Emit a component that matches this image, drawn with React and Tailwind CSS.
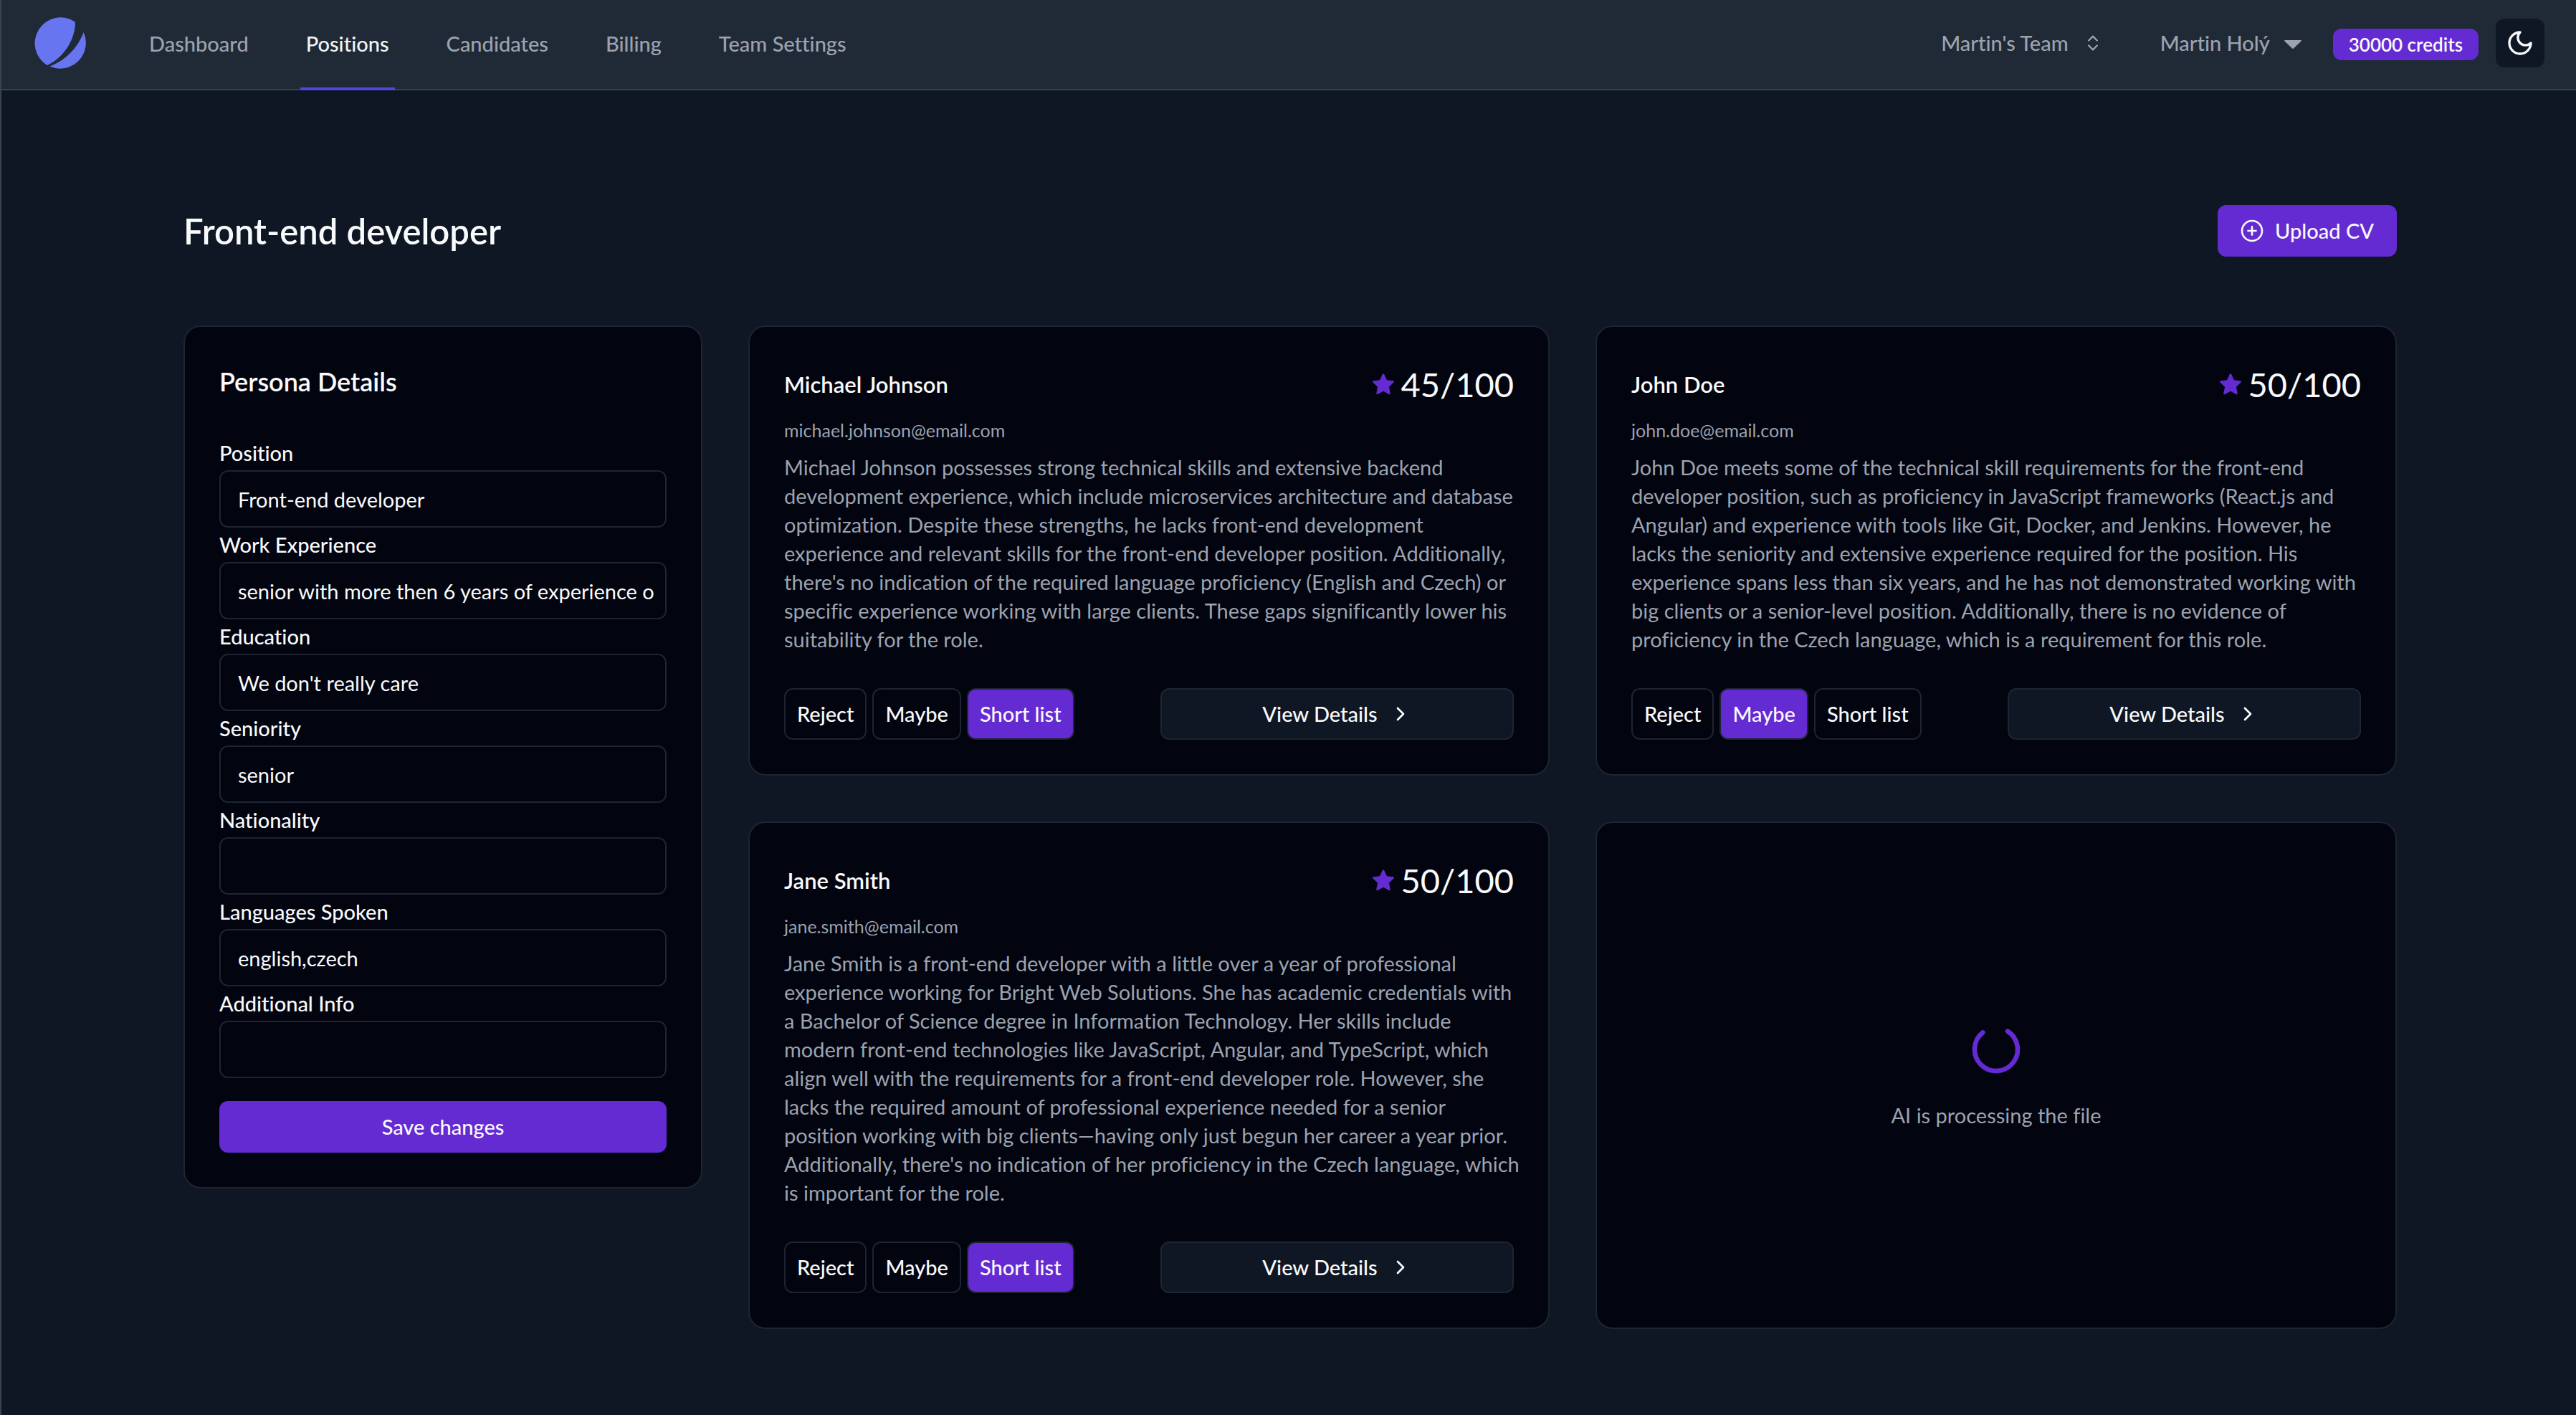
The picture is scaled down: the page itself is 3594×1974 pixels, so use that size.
import React, { useState } from "react";
import { ChevronRight, ChevronsUpDown } from "lucide-react";

const navItems = ["Dashboard", "Positions", "Candidates", "Billing", "Team Settings"];

const personaFields = [
  { id: "position", label: "Position", value: "Front-end developer" },
  { id: "experience", label: "Work Experience", value: "senior with more then 6 years of experience of working with big clients" },
  { id: "education", label: "Education", value: "We don't really care" },
  { id: "seniority", label: "Seniority", value: "senior" },
  { id: "nationality", label: "Nationality", value: "" },
  { id: "languages", label: "Languages Spoken", value: "english,czech" },
  { id: "additional", label: "Additional Info", value: "" },
];

const candidates = [
  {
    name: "Michael Johnson",
    email: "michael.johnson@email.com",
    score: 45,
    status: "Short list",
    summary: [
      "Michael Johnson possesses strong technical skills and extensive backend",
      "development experience, which include microservices architecture and database",
      "optimization. Despite these strengths, he lacks front-end development",
      "experience and relevant skills for the front-end developer position. Additionally,",
      "there's no indication of the required language proficiency (English and Czech) or",
      "specific experience working with large clients. These gaps significantly lower his",
      "suitability for the role.",
    ],
  },
  {
    name: "John Doe",
    email: "john.doe@email.com",
    score: 50,
    status: "Maybe",
    summary: [
      "John Doe meets some of the technical skill requirements for the front-end",
      "developer position, such as proficiency in JavaScript frameworks (React.js and",
      "Angular) and experience with tools like Git, Docker, and Jenkins. However, he",
      "lacks the seniority and extensive experience required for the position. His",
      "experience spans less than six years, and he has not demonstrated working with",
      "big clients or a senior-level position. Additionally, there is no evidence of",
      "proficiency in the Czech language, which is a requirement for this role.",
    ],
  },
  {
    name: "Jane Smith",
    email: "jane.smith@email.com",
    score: 50,
    status: "Short list",
    summary: [
      "Jane Smith is a front-end developer with a little over a year of professional",
      "experience working for Bright Web Solutions. She has academic credentials with",
      "a Bachelor of Science degree in Information Technology. Her skills include",
      "modern front-end technologies like JavaScript, Angular, and TypeScript, which",
      "align well with the requirements for a front-end developer role. However, she",
      "lacks the required amount of professional experience needed for a senior",
      "position working with big clients—having only just begun her career a year prior.",
      "Additionally, there's no indication of her proficiency in the Czech language, which",
      "is important for the role.",
    ],
  },
];

const statuses = ["Reject", "Maybe", "Short list"];

function Logo() {
  return (
    <svg viewBox="0 0 72 72" className="size-[72px] fill-[#6875f0]" aria-hidden="true">
      <path d="M57 6.7C57 32 40 57 17.7 67A36 36 0 1 1 57 6.7Z" />
      <path d="M68.7 21C60 44 42 61 21.3 68.6A36 36 0 0 0 68.7 21Z" />
    </svg>
  );
}

function MoonIcon() {
  return (
    <svg viewBox="0 0 24 24" className="size-10 fill-none stroke-current stroke-2" strokeLinecap="round" strokeLinejoin="round" aria-hidden="true">
      <path d="M12 3a6 6 0 0 0 9 9 9 9 0 1 1-9-9Z" />
    </svg>
  );
}

function PlusCircleIcon() {
  return (
    <svg viewBox="0 0 32 32" className="size-8 fill-none stroke-current stroke-[2.6]" strokeLinecap="round" aria-hidden="true">
      <circle cx="16" cy="16" r="14" />
      <path d="M16 10.4v11.2M10.4 16h11.2" />
    </svg>
  );
}

function StarIcon() {
  return (
    <svg viewBox="1.3 1.6 21.4 21.4" className="size-8 fill-[#652bd2]" aria-hidden="true">
      <path d="M11.2 2.9c.35-.7 1.25-.7 1.6 0l2.5 5.5 5.9.7c.8.1 1.1 1 .5 1.6l-4.4 4.1 1.2 5.9c.15.8-.6 1.4-1.3 1L12 18.8l-5.2 2.9c-.7.4-1.45-.2-1.3-1l1.2-5.9-4.4-4.1c-.6-.6-.3-1.5.5-1.6l5.9-.7Z" />
    </svg>
  );
}

function Spinner() {
  return (
    <svg viewBox="0 0 80 80" className="size-20 fill-none stroke-[#652bd2] stroke-[6.6]" strokeLinecap="round" role="img" aria-label="Loading">
      <path d="M56 14.6A30 30 0 1 1 21.4 16.4" />
    </svg>
  );
}

function Header() {
  return (
    <header className="flex h-[126px] items-stretch justify-between border-b-2 border-[#39434f] bg-[#202a36] pl-[46px] pr-11 text-[29px] font-medium text-[#9ca3af]">
      <div className="flex">
        <a href="#home" aria-label="Home" className="flex items-center pb-1">
          <Logo />
        </a>
        <nav className="-mb-0.5 ml-20 flex gap-16" aria-label="Main">
          {navItems.map((item) => (
            <a
              key={item}
              href="#"
              aria-current={item === "Positions" ? "page" : undefined}
              className={
                item === "Positions"
                  ? "flex items-center border-b-4 border-[#5046db] px-2 text-gray-100"
                  : "flex items-center border-b-4 border-transparent px-2"
              }
            >
              {item}
            </a>
          ))}
        </nav>
      </div>
      <div className="flex items-center">
        <button type="button" className="mr-20 flex items-center gap-5 pb-1">
          Martin's Team
          <ChevronsUpDown className="size-7" />
        </button>
        <button type="button" className="mr-11 flex items-center gap-5 pb-1">
          Martin Holý
          <svg viewBox="0 0 24 12" className="mt-1 h-3 w-6 fill-current" aria-hidden="true">
            <path d="M1 0h22q1.5.5.5 1.5L13 11.5q-1 .8-2 0L.5 1.5Q-.5.5 1 0Z" />
          </svg>
        </button>
        <span className="mr-6 rounded-xl bg-[#652bd2] px-[22px] py-1 text-[26px] leading-9 font-semibold text-gray-50">30000 credits</span>
        <button type="button" aria-label="Toggle theme" className="mb-1 flex size-[68px] items-center justify-center rounded-xl bg-[#101724] text-gray-50">
          <MoonIcon />
        </button>
      </div>
    </header>
  );
}

function PersonaForm() {
  return (
    <form className="col-span-3 self-start rounded-3xl border-2 border-[#1e2530] bg-[#02040f] p-12" onSubmit={(e) => e.preventDefault()}>
      <h2 className="text-4xl leading-[56px] font-semibold">Persona Details</h2>
      <div className="mt-12 text-[29px]">
        {personaFields.map((field) => (
          <div key={field.id}>
            <label htmlFor={field.id} className="block leading-[48px] font-medium">
              {field.label}
            </label>
            <input
              id={field.id}
              type="text"
              defaultValue={field.value}
              className="block h-20 w-full rounded-xl border-2 border-[#1e2530] bg-transparent pr-4 pl-6 outline-none"
            />
          </div>
        ))}
      </div>
      <button type="submit" className="mt-8 h-[72px] w-full rounded-xl bg-[#652bd2] text-[29px] font-medium">
        Save changes
      </button>
    </form>
  );
}

function CandidateCard({ candidate }) {
  const [status, setStatus] = useState(candidate.status);
  return (
    <article className="rounded-3xl border-2 border-[#1e2530] bg-[#02040f] p-12">
      <div className="flex h-16 items-center justify-between">
        <h2 className="text-[31px] font-semibold">{candidate.name}</h2>
        <div className="flex items-center gap-2 text-[47px] leading-[64px]">
          <StarIcon />
          {candidate.score}/100
        </div>
      </div>
      <p className="mt-4 text-[25px] leading-8 text-[#9ca3af]">{candidate.email}</p>
      <p className="mt-4 text-[29px] leading-10 text-[#9ca3af]">
        {candidate.summary.map((line) => (
          <span key={line} className="block whitespace-nowrap">
            {line}
          </span>
        ))}
      </p>
      <div className="mt-12 grid grid-cols-2 gap-8 text-[29px] font-medium">
        <div className="flex gap-2">
          {statuses.map((s) => (
            <button
              key={s}
              type="button"
              aria-pressed={s === status}
              onClick={() => setStatus(s)}
              className={
                s === status
                  ? "h-[72px] rounded-xl border-2 border-[#1e2530] bg-[#652bd2] px-4 whitespace-nowrap"
                  : "h-[72px] rounded-xl border-2 border-[#1e2530] px-4 whitespace-nowrap"
              }
            >
              {s}
            </button>
          ))}
        </div>
        <button type="button" className="flex h-[72px] items-center justify-center gap-4 rounded-xl border-2 border-[#1e2530] bg-[#101724]">
          View Details
          <ChevronRight className="size-8" />
        </button>
      </div>
    </article>
  );
}

export default function App() {
  return (
    <div className="min-h-screen border-l-2 border-[#39434f] bg-[#101724] font-['Lato',sans-serif] text-gray-50 [font-variant-ligatures:no-common-ligatures]">
      <Header />
      <main className="pt-40 pr-[250px] pb-20 pl-[254px]">
        <div className="flex items-center justify-between">
          <h1 className="text-[49px] leading-[72px] font-semibold">Front-end developer</h1>
          <button type="button" className="flex h-[72px] items-center gap-4 rounded-xl bg-[#652bd2] px-8 text-[29px] font-medium">
            <PlusCircleIcon />
            Upload CV
          </button>
        </div>
        <div className="mt-24 grid grid-cols-12 gap-16">
          <PersonaForm />
          <section className="col-span-9 grid grid-cols-2 gap-16" aria-label="Candidates">
            {candidates.map((c) => (
              <CandidateCard key={c.name} candidate={c} />
            ))}
            <article className="flex flex-col items-center justify-center gap-8 rounded-3xl border-2 border-[#1e2530] bg-[#02040f]">
              <Spinner />
              <p className="text-[29px] leading-10 text-[#9ca3af]">AI is processing the file</p>
            </article>
          </section>
        </div>
      </main>
    </div>
  );
}
